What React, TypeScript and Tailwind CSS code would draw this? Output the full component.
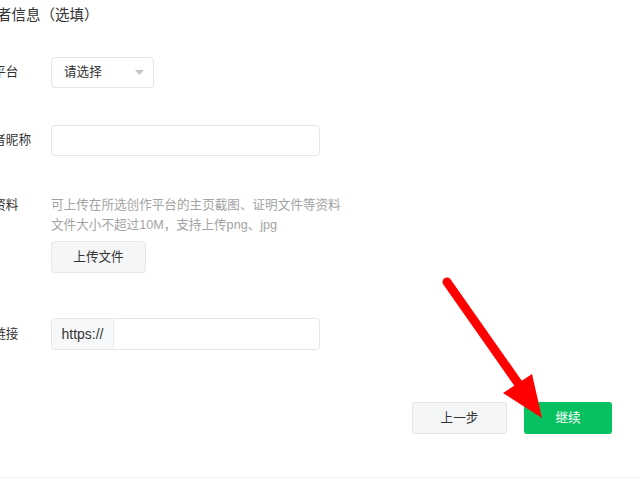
import React from "react";

const rowLabel = "w-[83px] shrink-0 text-[12.6px] text-[#333]";

export default function App() {
  return (
    <div className="relative w-[640px] h-[480px] overflow-hidden bg-white font-['Liberation_Sans','Noto_Sans_CJK_SC',sans-serif] text-[#333]">
      <div className="h-[478px] border-b border-[#f0f0f0]">
        <div className="ml-[-32px]">
          <div className="pt-[4px] h-[27px] leading-[22px] text-[14.5px] text-[#333]">创作者信息（选填）</div>

          {/* platform */}
          <div className="mt-[30px] flex items-center h-[31px]">
            <div className={rowLabel}>所属平台</div>
            <div className="w-[103px] h-[31px] rounded-[4px] border border-[#e5e5e5] flex items-center justify-between pl-[12px] pr-[9px] text-[12.6px]">
              <span>请选择</span>
              <svg width="9" height="5" viewBox="0 0 9 5">
                <path d="M0 0h9L4.5 5z" fill="#c4c4c4" />
              </svg>
            </div>
          </div>

          {/* nickname */}
          <div className="mt-[37px] flex items-center h-[31px]">
            <div className={rowLabel}>创作者昵称</div>
            <div className="w-[269px] h-[31px] rounded-[4px] border border-[#e5e5e5]" />
          </div>

          {/* files */}
          <div className="mt-[39px] flex leading-[20px]">
            <div className={rowLabel}>证明资料</div>
            <div className="flex flex-col">
              <div className="text-[12.6px] text-[#a3a3a3]">可上传在所选创作平台的主页截图、证明文件等资料</div>
              <div className="text-[12.6px] text-[#a3a3a3]">文件大小不超过10M，支持上传png、jpg</div>
              <button className="mt-[6px] w-[95px] h-[32px] rounded-[4px] border border-[#e7e7e7] bg-[#f5f6f7] text-[12.6px] text-[#333]">
                上传文件
              </button>
            </div>
          </div>

          {/* link */}
          <div className="mt-[45px] flex items-center h-[32px]">
            <div className={rowLabel}>主页链接</div>
            <div className="w-[269px] h-[32px] rounded-[4px] border border-[#e5e5e5] flex overflow-hidden">
              <div className="w-[62px] bg-[#f7f8fa] border-r border-[#ececec] flex items-center justify-center text-[14px] text-[#333]">
                https://
              </div>
              <div className="flex-1" />
            </div>
          </div>
        </div>

        {/* actions */}
        <div className="mt-[52px] flex justify-end gap-[17px] pr-[28px]">
          <button className="w-[95px] h-[32px] rounded-[3px] border border-[#e5e5e5] bg-[#f5f6f7] text-[12.6px] text-[#333]">
            上一步
          </button>
          <button className="w-[88px] h-[32px] rounded-[3px] bg-[#07c160] text-[12.6px] text-white">继续</button>
        </div>
      </div>

      {/* red annotation arrow */}
      <svg className="absolute left-0 top-0 pointer-events-none" width="640" height="480" viewBox="0 0 640 480">
        <line x1="447" y1="282" x2="520" y2="386" stroke="#ff0000" strokeWidth="9" strokeLinecap="round" />
        <polygon points="503,393 532,374 542,418" fill="#ff0000" />
      </svg>
    </div>
  );
}
